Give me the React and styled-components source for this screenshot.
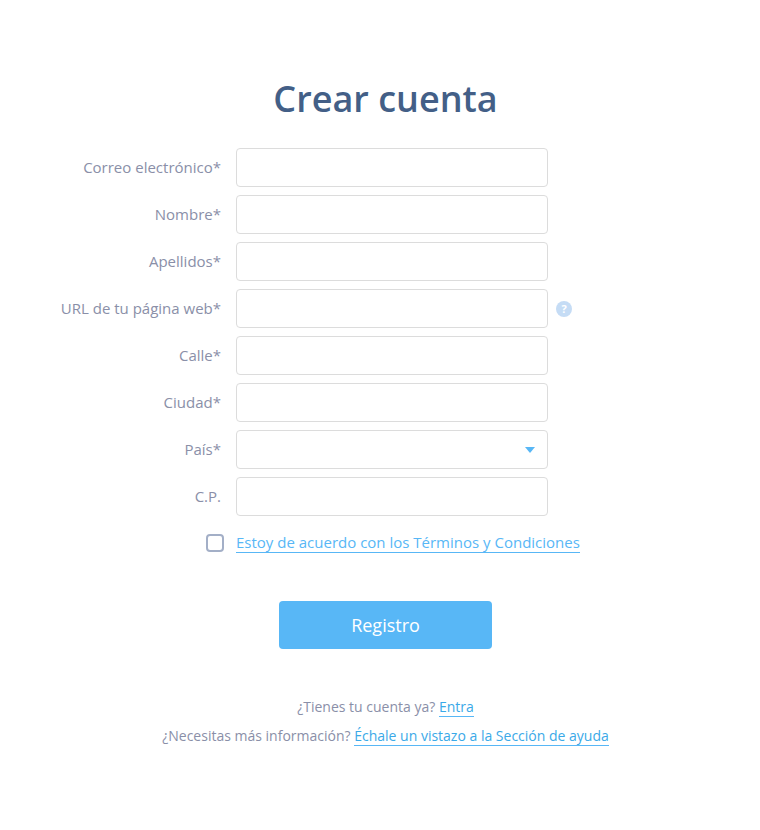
import React from 'react'
import styled, { createGlobalStyle } from 'styled-components'

const GlobalStyle = createGlobalStyle`
  html, body {
    margin: 0;
    padding: 0;
    background: #fff;
    overflow-x: hidden;
  }
  body {
    font-family: "Open Sans", "Liberation Sans", sans-serif;
  }
`

const Page = styled.div`
  width: 771px;
  height: 830px;
  padding-top: 75px;
  box-sizing: border-box;
  display: flex;
  flex-direction: column;
  align-items: center;
`

const Title = styled.h1`
  margin: 0 0 25px;
  font-size: 36px;
  line-height: 48px;
  font-weight: 600;
  color: #435f87;
`

const Form = styled.form`
  align-self: stretch;
  display: flex;
  flex-direction: column;
  gap: 8px;
`

const Row = styled.div`
  display: grid;
  grid-template-columns: 221px 312px auto;
  column-gap: 15px;
  align-items: center;
`

const Label = styled.label`
  padding-bottom: 2px;
  font-size: 15px;
  color: #8a8fa8;
  text-align: right;
  white-space: nowrap;
`

const Field = styled.div`
  position: relative;
  height: 39px;
`

const Input = styled.input`
  width: 100%;
  height: 100%;
  box-sizing: border-box;
  border: 1px solid #dcdcdc;
  border-radius: 4px;
  background: #fff;
  outline: none;
`

const Caret = styled.span`
  position: absolute;
  right: 13px;
  top: 17px;
  border-left: 5.5px solid transparent;
  border-right: 5.5px solid transparent;
  border-top: 6px solid #58b7f6;
`

const Help = styled.span`
  width: 16px;
  height: 16px;
  margin-left: -7px;
  border-radius: 50%;
  background: #c5dcf5;
  color: #fff;
  font-size: 11px;
  font-weight: 700;
  line-height: 16px;
  text-align: center;
`

const TermsRow = styled.div`
  display: flex;
  align-items: center;
  gap: 12px;
  margin: 9px 0 0 206px;
`

const Checkbox = styled.input.attrs({ type: 'checkbox' })`
  appearance: none;
  width: 18px;
  height: 18px;
  margin: 0;
  border: 2px solid #a3afc7;
  border-radius: 4px;
  background: #fff;
`

const TermsLink = styled.a`
  font-size: 15px;
  line-height: 19px;
  color: #58b7f6;
  border-bottom: 1px solid #58b7f6;
  text-decoration: none;
`

const SubmitButton = styled.button`
  display: block;
  width: 213px;
  height: 48px;
  margin: 40px auto 0;
  border: none;
  border-radius: 4px;
  background: #58b7f6;
  color: #fff;
  font-family: inherit;
  font-size: 18px;
`

const Footer = styled.div`
  margin-top: 48px;
  display: flex;
  flex-direction: column;
  align-items: center;
  gap: 9px;
`

const FooterLine = styled.p`
  margin: 0;
  font-size: 14px;
  line-height: 20px;
  color: #8a8fa8;
`

const FooterLink = styled.a`
  color: #3aa9e8;
  border-bottom: 1px solid #58b7f6;
  text-decoration: none;
`

const fields = [
  { label: 'Correo electrónico*' },
  { label: 'Nombre*' },
  { label: 'Apellidos*' },
  { label: 'URL de tu página web*', help: true },
  { label: 'Calle*' },
  { label: 'Ciudad*' },
  { label: 'País*', select: true },
  { label: 'C.P.' },
]

const App = () => {
  return (
    <Page>
      <GlobalStyle />
      <Title>Crear cuenta</Title>
      <Form>
        {fields.map((f) => (
          <Row key={f.label}>
            <Label>{f.label}</Label>
            <Field>
              <Input />
              {f.select && <Caret />}
            </Field>
            {f.help && <Help>?</Help>}
          </Row>
        ))}
        <TermsRow>
          <Checkbox />
          <TermsLink href="#">Estoy de acuerdo con los Términos y Condiciones</TermsLink>
        </TermsRow>
        <SubmitButton type="button">Registro</SubmitButton>
      </Form>
      <Footer>
        <FooterLine>¿Tienes tu cuenta ya? <FooterLink href="#">Entra</FooterLink></FooterLine>
        <FooterLine>¿Necesitas más información? <FooterLink href="#">Échale un vistazo a la Sección de ayuda</FooterLink></FooterLine>
      </Footer>
    </Page>
  )
}

export default App
